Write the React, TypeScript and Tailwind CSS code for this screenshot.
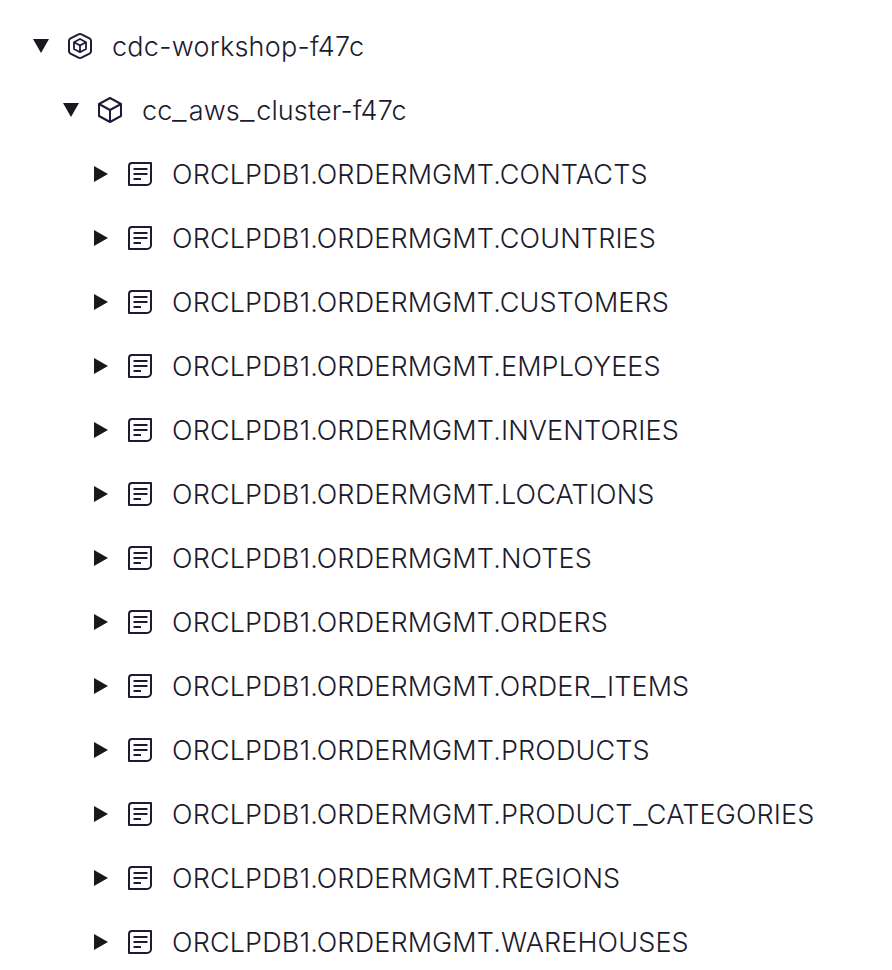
import React from "react";

const tables = [
  "CONTACTS",
  "COUNTRIES",
  "CUSTOMERS",
  "EMPLOYEES",
  "INVENTORIES",
  "LOCATIONS",
  "NOTES",
  "ORDERS",
  "ORDER_ITEMS",
  "PRODUCTS",
  "PRODUCT_CATEGORIES",
  "REGIONS",
  "WAREHOUSES",
];

function Caret({ open = false }: { open?: boolean }) {
  return (
    <svg className="size-4 shrink-0" viewBox="0 0 16 16" fill="#18191f">
      {open ? <path d="M0 1h16L8 15z" /> : <path d="M1 0v16l14-8z" />}
    </svg>
  );
}

function Icon({ children }: { children: React.ReactNode }) {
  return (
    <svg
      className="ml-[15px] size-8 shrink-0"
      viewBox="0 0 32 32"
      fill="none"
      stroke="#1b1b38"
      strokeWidth="2"
      strokeLinejoin="round"
    >
      {children}
    </svg>
  );
}

function EnvironmentIcon() {
  return (
    <Icon>
      <path d="M17.500 4.300l8 4Q27 9.200 27 11v10q0 1.800-1.500 2.700l-8 4q-1.500.7-3 0l-8-4Q5 22.800 5 21V11q0-1.800 1.500-2.700l8-4q1.500-.7 3 0z" />
      <path strokeWidth="1.800" d="M16 9l6 3.200v6.800L16 22.300l-6-3.300v-6.800zM10 12.200l6 3.300 6-3.300M16 15.500v6.800" />
    </Icon>
  );
}

function ClusterIcon() {
  return (
    <Icon>
      <path d="M16 4l11 6v12l-11 6-11-6V10zM5 10l11 6 11-6M16 16v12" />
    </Icon>
  );
}

function TableIcon() {
  return (
    <Icon>
      <path d="M8 5h19v18a4 4 0 0 1-4 4H5V8a3 3 0 0 1 3-3z" />
      <path d="M9.500 11h14M9.500 16h14M9.500 21h7.500" />
    </Icon>
  );
}

function Label({ text }: { text: string }) {
  return (
    <>
      {text.split(/(_)/).map((part, i, parts) =>
        part === "_" ? (
          <span
            key={i}
            className={`inline-block origin-left scale-x-[1.2] ${parts[i - 1].endsWith("T") ? "mr-0.5" : "mr-1"}`}
          >
            _
          </span>
        ) : (
          part
        ),
      )}
    </>
  );
}

function Row({ className, open, icon, label }: { className: string; open?: boolean; icon: React.ReactNode; label: string }) {
  return (
    <div className={`flex h-16 items-center ${className}`}>
      <Caret open={open} />
      {icon}
      <span className="ml-4 pt-0.5 whitespace-nowrap">
        <Label text={label} />
      </span>
    </div>
  );
}

export default function App() {
  return (
    <main className="h-[970px] overflow-hidden bg-white pt-[14px] font-['Inter',sans-serif] text-[27px] leading-10 font-light tracking-[0.14px] text-[#1b1b2e]">
      <Row className="pl-[33px] tracking-[0.25px]" open icon={<EnvironmentIcon />} label="cdc-workshop-f47c" />
      <Row className="pl-[63px]" open icon={<ClusterIcon />} label="cc_aws_cluster-f47c" />
      {tables.map((name) => (
        <Row key={name} className="pl-[93px]" icon={<TableIcon />} label={`ORCLPDB1.ORDERMGMT.${name}`} />
      ))}
    </main>
  );
}
